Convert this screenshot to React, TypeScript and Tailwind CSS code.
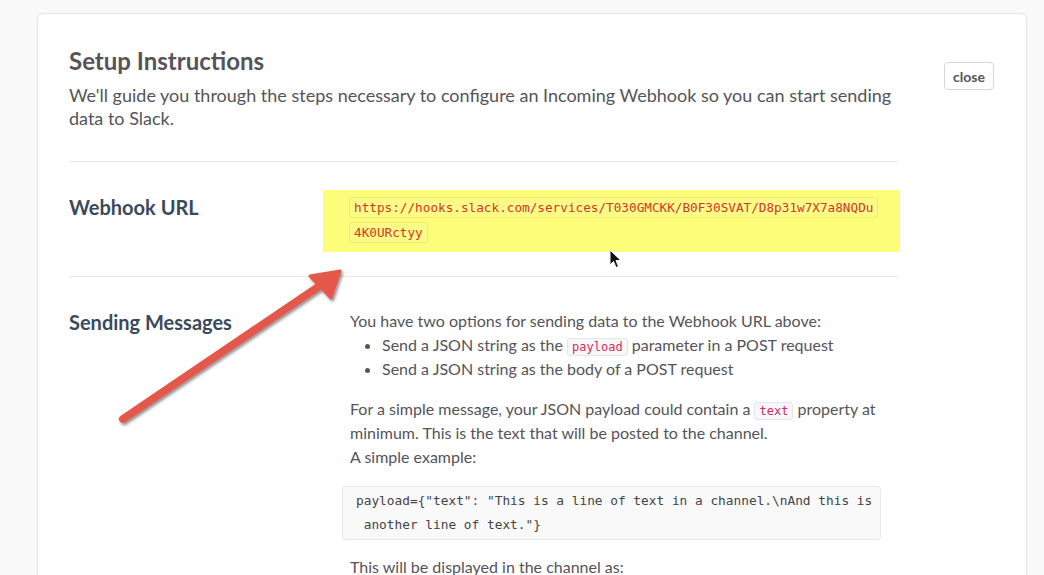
import React from "react";

const sans = { fontFamily: "Lato, 'Noto Sans', sans-serif" };

function InlineCode({ children }: { children: React.ReactNode }) {
  return (
    <code className="rounded-[3px] border border-[#e6e6ea] bg-[#f7f7f9] px-[4px] py-[1px] font-['DejaVu_Sans_Mono',monospace] text-[12px] leading-none text-[#d72b5a]">
      {children}
    </code>
  );
}

function Arrow() {
  return (
    <svg className="pointer-events-none absolute left-0 top-0" width="1044" height="575">
      <defs>
        <filter id="sh" x="-20%" y="-20%" width="140%" height="140%">
          <feDropShadow dx="1.5" dy="2" stdDeviation="1.5" floodColor="#000" floodOpacity="0.45" />
        </filter>
      </defs>
      <g filter="url(#sh)">
        <line x1="123" y1="419" x2="318" y2="287" stroke="#e4594b" strokeWidth="8" strokeLinecap="round" />
        <polygon points="340,271 310,276 331,298" fill="#e4594b" stroke="#e4594b" strokeWidth="3" strokeLinejoin="round" />
      </g>
    </svg>
  );
}

function Cursor() {
  return (
    <svg className="pointer-events-none absolute left-[609px] top-[249px]" width="14" height="20" viewBox="0 0 14 20">
      <path d="M1 1 L1 16 L4.5 12.5 L7 18.5 L9.5 17.5 L7 11.5 L12 11.5 Z" fill="#111" stroke="#fff" strokeWidth="1" strokeLinejoin="round" />
    </svg>
  );
}

const urlCode =
  "rounded-[3px] border border-[#ecec70] bg-[#fbfb86] px-[4px] py-[2px] font-['DejaVu_Sans_Mono',monospace] text-[12.7px] leading-none text-[#cf3a2a]";

export default function App() {
  return (
    <div className="relative min-h-[575px] overflow-hidden bg-[#f9f9f9] pl-[37px] pt-[13px]" style={sans}>
      <div className="h-[600px] w-[990px] rounded-[6px] border border-[#e3e3e3] bg-white pl-[31px] pr-8 pt-8">
        <div className="flex justify-between">
          <div className="w-[829px]">
            <h1 className="text-[24px] font-bold leading-[30px] text-[#555459]">Setup Instructions</h1>
            <p className="mt-[8px] text-[18px] leading-[23px] text-[#555459]">
              We'll guide you through the steps necessary to configure an Incoming Webhook so you can start sending data to Slack.
            </p>
          </div>
          <button className="mt-[16px] h-[28px] self-start rounded-[4px] border border-[#d6d6d6] bg-white px-[8px] text-[14px] font-bold text-[#555459]">
            close
          </button>
        </div>

        <div className="w-[829px]">
          <div className="mt-[31px] h-px bg-[#e8e8e8]" />

          <div className="flex pt-[28px]">
            <h2 className="w-[254px] shrink-0 pt-[5px] text-[20px] font-bold leading-[24px] text-[#3a4a5e]">Webhook URL</h2>
            <div className="w-[577px] shrink-0 bg-[#fdfd7a] pb-[7px] pl-[26px] pr-[10px] pt-[5px] text-[12.7px] leading-[25px]">
              <div>
                <code className={urlCode}>https://hooks.slack.com/services/T030GMCKK/B0F30SVAT/D8p31w7X7a8NQDu</code>
              </div>
              <div>
                <code className={urlCode}>4K0URctyy</code>
              </div>
            </div>
          </div>

          <div className="mt-[24px] h-px bg-[#e8e8e8]" />

          <div className="flex pt-[32px]">
            <h2 className="w-[254px] shrink-0 pt-[1px] text-[20px] font-bold leading-[24px] text-[#3a4a5e]">Sending Messages</h2>
            <div className="w-[575px] text-[16px] leading-[24px] text-[#555459]">
              <div className="pl-[27px]">
                <p>You have two options for sending data to the Webhook URL above:</p>
                <ul className="list-disc pl-8">
                  <li>
                    Send a JSON string as the <InlineCode>payload</InlineCode> parameter in a POST request
                  </li>
                  <li>Send a JSON string as the body of a POST request</li>
                </ul>
                <p className="mt-[16px]">
                  For a simple message, your JSON payload could contain a <InlineCode>text</InlineCode> property at minimum. This is the text that will be posted to the channel.
                  <br />
                  A simple example:
                </p>
              </div>
              <pre className="ml-[19px] mt-[17px] w-[539px] whitespace-pre rounded-[3px] border border-[#e8e8e8] bg-[#f9f9f9] px-[13px] py-[2px] font-['DejaVu_Sans_Mono',monospace] text-[12.8px] leading-[24px] text-[#444]">
                {'payload={"text": "This is a line of text in a channel.\\nAnd this is\n another line of text."}'}
              </pre>
              <p className="mt-[15px] pl-[27px]">This will be displayed in the channel as:</p>
            </div>
          </div>
        </div>
      </div>
      <Arrow />
      <Cursor />
    </div>
  );
}
